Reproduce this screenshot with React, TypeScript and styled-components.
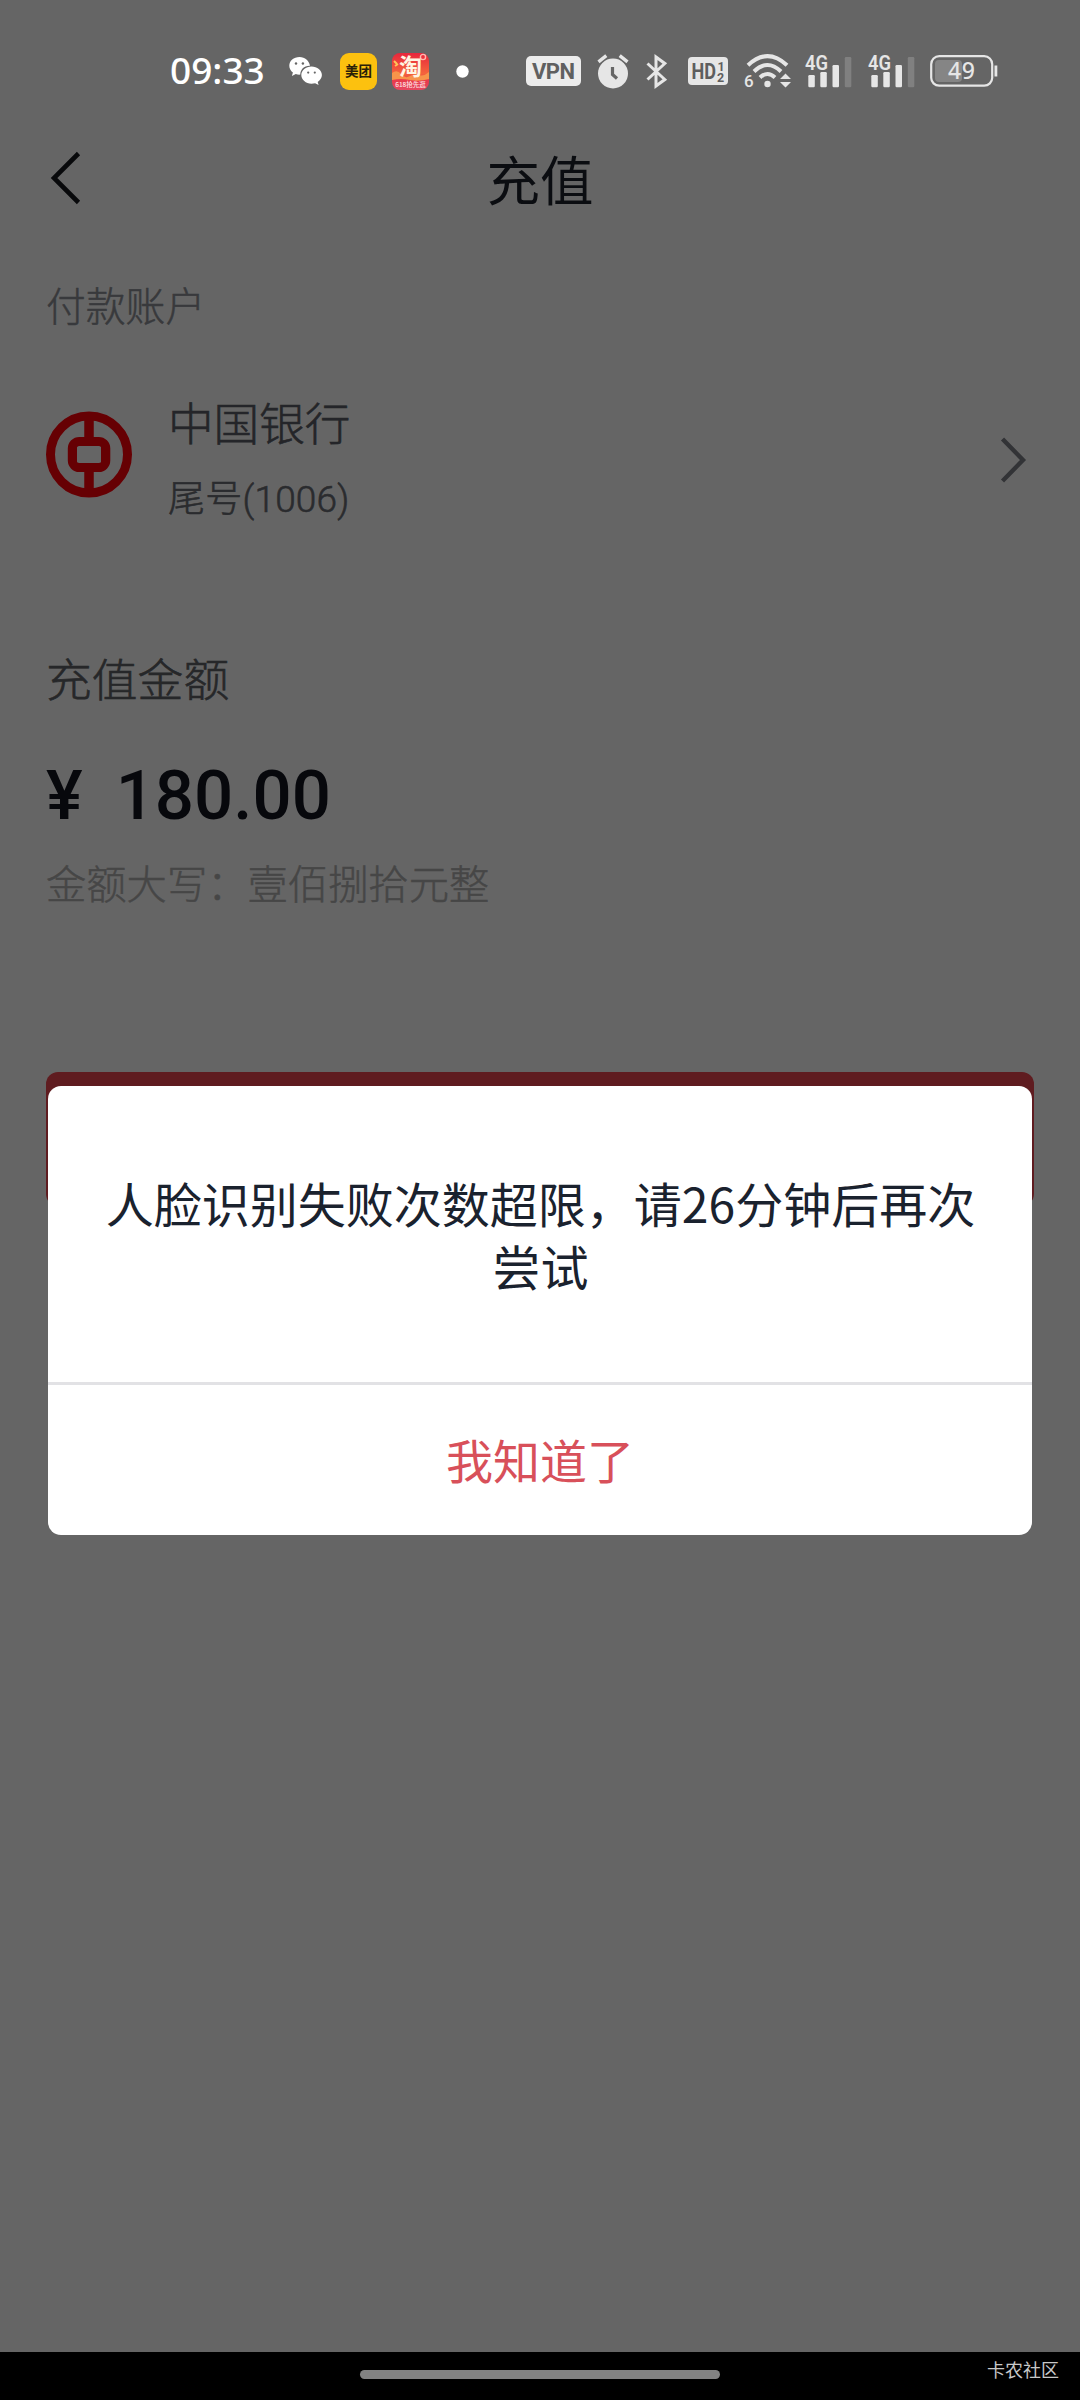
import React from "react";
import styled, { createGlobalStyle } from "styled-components";

const cjk = `"Noto Sans CJK SC", sans-serif`;

const GlobalStyle = createGlobalStyle`
  * { box-sizing: border-box; }
  body { margin: 0; background: #fff; }
`;

const Screen = styled.div`
  position: relative;
  display: flex;
  flex-direction: column;
  width: 1080px;
  height: 2400px;
  overflow: hidden;
  background: #fdfdfd;
  font-family: Roboto, ${cjk};
`;

const NavBar = styled.header`
  display: grid;
  grid-template-columns: 100px 1fr 100px;
  align-items: center;
  height: 80px;
  margin-top: 138px;
`;

const BackButton = styled.button`
  display: flex;
  justify-content: flex-end;
  padding: 0 19px 0 0;
  border: 0;
  background: none;
`;

const Title = styled.h1`
  margin: 0;
  text-align: center;
  font: 400 53.5px/80px ${cjk};
  color: #1d212b;
`;

const SectionLabel = styled.div`
  margin: 56px 0 0 46px;
  font: 300 39.8px/60px ${cjk};
  color: #8d9096;
  -webkit-text-stroke: 0.5px #8d9096;
`;

const AccountRow = styled.div`
  display: flex;
  align-items: center;
  height: 150px;
  margin-top: 48px;
  padding: 0 54px 0 46px;
`;

const AccountText = styled.div`
  flex: 1;
  display: flex;
  flex-direction: column;
  gap: 13px;
  margin-left: 36px;
  padding-top: 5px;
`;

const BankName = styled.div`
  font: 300 45.6px/68px ${cjk};
  color: #5a5d66;
  -webkit-text-stroke: 0.6px #5a5d66;
`;

const CardTail = styled.div`
  font: 300 37px/64px Roboto, ${cjk};
  color: #6a6d74;
  letter-spacing: 0.2px;
  -webkit-text-stroke: 0.6px #6a6d74;
`;

const AmountSection = styled.section`
  display: flex;
  flex-direction: column;
  margin: 110px 46px 0;
`;

const AmountLabel = styled.div`
  font: 300 45.8px/70px ${cjk};
  color: #606266;
  -webkit-text-stroke: 0.6px #606266;
`;

const Amount = styled.div`
  display: flex;
  gap: 33px;
  margin-top: 44px;
  font: 500 69px/80px Roboto, sans-serif;
  color: #12141f;
`;

const AmountWords = styled.div`
  margin-top: 16px;
  font: 300 40.3px/60px ${cjk};
  color: #b0b0b0;
  -webkit-text-stroke: 0.5px #b0b0b0;
`;

const SubmitButton = styled.button`
  height: 134px;
  margin: 160px 46px 0;
  border: 0;
  border-radius: 12px;
  background: #ed4850;
`;

const Backdrop = styled.div`
  position: absolute;
  inset: 0;
  background: rgba(0, 0, 0, 0.6);
`;

const StatusBar = styled.div`
  position: absolute;
  top: 0;
  left: 0;
  right: 0;
  display: flex;
  align-items: center;
  height: 142px;
  padding-left: 170px;
`;

const Clock = styled.div`
  width: 119px;
  margin-top: -2px;
  font: 500 37px/50px "Noto Sans", sans-serif;
  color: #fff;
`;

const Glyph = styled.svg<{ $gap?: number }>`
  flex: none;
  display: block;
  overflow: visible;
  margin-left: ${(p) => p.$gap ?? 0}px;
`;

const LogoSlot = styled.div`
  margin-bottom: 5px;
`;

const ArrowSlot = styled.div`
  margin-top: 5px;
`;

const Dialog = styled.div`
  position: absolute;
  top: 1086px;
  left: 48px;
  width: 984px;
  height: 449px;
  display: flex;
  flex-direction: column;
  border-radius: 13px;
  background: #fff;
  overflow: hidden;
`;

const Message = styled.p`
  flex: 1;
  margin: 0;
  padding: 85px 56px 0 57px;
  text-align: center;
  font: 400 48px/63px ${cjk};
  color: #1a222e;
`;

const ConfirmButton = styled.button`
  height: 153px;
  padding: 0 0 3px;
  border: 0;
  border-top: 3px solid #e2e2e5;
  background: none;
  font: 400 47px/70px ${cjk};
  color: #d8505a;
`;

const GestureBar = styled.div`
  position: absolute;
  left: 0;
  right: 0;
  bottom: 0;
  display: grid;
  grid-template-columns: 360px 360px 1fr;
  height: 48px;
  background: #000;
`;

const Pill = styled.div`
  grid-column: 2;
  height: 9px;
  margin-top: 18px;
  border-radius: 5px;
  background: #828282;
`;

const Watermark = styled.div`
  padding-right: 21px;
  text-align: right;
  font: 400 18px/35px ${cjk};
  color: #c8c8c8;
`;

const ink = "#e6e6e6";

const WeChat = () => (
  <Glyph width="33" height="28" viewBox="0 0 33 28">
    <path fill="#fff" d="M10.500 0C4.700 0 .3 3.900.3 8.800c0 2.800 1.400 5.200 3.600 6.800l-1 3.500 3.900-2c1.300.4 2.800.600 4.500.500C11.300 12.500 15 8.500 21 8.700 20 3.600 16.200 0 10.500 0z" />
    <path fill="#fff" d="M22.500 9.600c-5.600 0-10.200 3.700-10.200 8.500s4.500 8.600 10.200 8.600c1.300 0 2.500-.2 3.600-.5l3.500 1.900-.9-3.200c2.500-1.600 4.200-4 4.200-6.800 0-4.800-4.700-8.500-10.400-8.500z" />
    <g fill="#666">
      <circle cx="7" cy="6.500" r="1.200" /><circle cx="13.900" cy="6.500" r="1.200" />
      <circle cx="19.200" cy="15.600" r="1.100" /><circle cx="25.800" cy="15.600" r="1.100" />
    </g>
  </Glyph>
);

const Meituan = () => (
  <Glyph $gap={18} width="37" height="37" viewBox="0 0 37 37">
    <rect width="37" height="37" rx="9" fill="#fcc10f" />
    <text x="18.500" y="23.300" textAnchor="middle" fontFamily={cjk} fontWeight="700" fontSize="13.500" fill="#2a2008">美团</text>
  </Glyph>
);

const Taobao = () => (
  <Glyph $gap={15} width="37" height="37" viewBox="0 0 37 37">
    <defs>
      <linearGradient id="tb" x1="0" y1="0" x2="0" y2="1">
        <stop offset="0" stopColor="#e8263c" /><stop offset=".55" stopColor="#f4643c" /><stop offset=".75" stopColor="#e83a4c" /><stop offset="1" stopColor="#e64860" />
      </linearGradient>
    </defs>
    <rect width="37" height="37" rx="8" fill="url(#tb)" />
    <path d="M0 20q5-4 9 1t9 2 9-1 10-3v7q-10 3-19 1T0 27z" fill="#f7944a" />
    <circle cx="31" cy="4" r="2.600" fill="none" stroke="#ffb9b0" strokeWidth="1.400" />
    <path d="M2 8l3 3M3 13l3-2" stroke="#ffc457" strokeWidth="2" />
    <text x="18.500" y="22" textAnchor="middle" fontFamily={cjk} fontWeight="700" fontSize="23" fill="#fff4e2">淘</text>
    <text x="18.500" y="34" textAnchor="middle" fontFamily={cjk} fontWeight="500" fontSize="6.500" fill="#ffe4e4">618抢先逛</text>
  </Glyph>
);

const Dot = () => (
  <Glyph $gap={27} width="13" height="13" viewBox="0 0 13 13"><circle cx="6.500" cy="6.500" r="6.200" fill="#fff" /></Glyph>
);

const Vpn = () => (
  <Glyph $gap={57} width="55" height="30" viewBox="0 0 55 30">
    <rect width="55" height="30" rx="5" fill="#ececec" />
    <text x="27.500" y="22.700" textAnchor="middle" textLength="43" fontFamily="Roboto, sans-serif" fontWeight="700" fontSize="22" fill="#606060">VPN</text>
  </Glyph>
);

const Alarm = () => (
  <Glyph $gap={16} width="32" height="35" viewBox="0 0 32 35">
    <circle cx="16" cy="19.500" r="15" fill={ink} />
    <path d="M1.500 7.800L9.300 1.600M30.500 7.800L22.700 1.600" stroke={ink} strokeWidth="3.400" />
    <path d="M15.500 13v7.500l4.500 4" fill="none" stroke="#666" strokeWidth="3.200" />
  </Glyph>
);

const Bluetooth = () => (
  <Glyph $gap={17} width="22" height="35" viewBox="0 0 22 35">
    <path d="M1.500 9.500L18.800 25.500 10 32V3l8.800 6.500L1.500 25.500" fill="none" stroke={ink} strokeWidth="3" strokeLinejoin="miter" />
  </Glyph>
);

const Hd = () => (
  <Glyph $gap={20} width="40" height="28" viewBox="0 0 40 28">
    <rect width="40" height="28" rx="4" fill={ink} />
    <g fontFamily="Roboto, sans-serif" fontWeight="700" fill="#5e5e5e">
      <text x="3.500" y="22" textLength="24.500" lengthAdjust="spacingAndGlyphs" fontSize="22">HD</text>
      <text x="29.500" y="13.500" fontSize="12.500">1</text>
      <text x="29" y="25" fontSize="12.500">2</text>
    </g>
  </Glyph>
);

const Wifi = () => (
  <Glyph $gap={17} width="48" height="35" viewBox="0 0 48 35">
    <g fill="none" stroke={ink} strokeWidth="4">
      <path d="M3 11.200Q22.500 -7 42 11.200" />
      <path d="M9 17.500Q22.500 4.500 36 17.500" />
      <path d="M15 23.500Q22.500 16.500 30 23.500" />
    </g>
    <circle cx="22.500" cy="30" r="3.200" fill={ink} />
    <text x="-1" y="33" fontFamily="Roboto, sans-serif" fontWeight="500" fontSize="17" fill={ink}>6</text>
    <path d="M35 25l5.500-5.500L46 25zM35 28h11l-5.500 5.500z" fill={ink} />
  </Glyph>
);

const Signal = ({ gap }: { gap: number }) => (
  <Glyph $gap={gap} width="47" height="34" viewBox="0 0 47 34">
    <text x="0" y="16" textLength="23" lengthAdjust="spacingAndGlyphs" fontFamily="Roboto, sans-serif" fontWeight="600" fontSize="20.500" fill={ink}>4G</text>
    <g fill={ink}>
      <rect x="3.300" y="21" width="6.500" height="12.300" rx="1.200" />
      <rect x="15.300" y="18" width="6.500" height="15.300" rx="1.200" />
      <rect x="27.500" y="11" width="6.500" height="22.300" rx="1.200" />
      <rect x="39.800" y="3" width="6.500" height="30.300" rx="1.200" fill="#808080" />
    </g>
  </Glyph>
);

const Battery = () => (
  <Glyph $gap={15} width="68" height="32" viewBox="0 0 68 32">
    <rect x="5" y="5" width="27" height="22" rx="4" fill="#858585" />
    <rect x="1.200" y="1.200" width="61" height="29.500" rx="8" fill="none" stroke={ink} strokeWidth="2.200" />
    <rect x="64.500" y="10.500" width="2.800" height="11" fill={ink} />
    <text x="31.500" y="24" textAnchor="middle" textLength="27" fontFamily={`"Noto Sans", sans-serif`} fontWeight="500" fontSize="23" fill={ink}>49</text>
  </Glyph>
);

const BankLogo = () => (
  <Glyph width="86" height="87" viewBox="0 0 86 87">
    <g fill="none" stroke="#ff0009">
      <circle cx="43" cy="43.500" r="38.500" strokeWidth="9" />
      <rect x="26.300" y="30.500" width="33.500" height="26" rx="7" strokeWidth="9" />
      <path d="M43 6v22M43 59v22" strokeWidth="9.500" />
    </g>
    <path fill="#ff0009" d="M27 31h32v25H27zM31 35v17h24V35z" fillRule="evenodd" />
  </Glyph>
);

export default function App() {
  return (
    <Screen>
      <GlobalStyle />
      <NavBar>
        <BackButton aria-label="返回">
          <Glyph width="31" height="54" viewBox="0 0 31 54">
            <path d="M28.500 2.500L4 27l24.500 24.500" fill="none" stroke="#16181d" strokeWidth="4.600" />
          </Glyph>
        </BackButton>
        <Title>充值</Title>
      </NavBar>
      <SectionLabel>付款账户</SectionLabel>
      <AccountRow>
        <LogoSlot><BankLogo /></LogoSlot>
        <AccountText>
          <BankName>中国银行</BankName>
          <CardTail>尾号(1006)</CardTail>
        </AccountText>
        <ArrowSlot>
          <Glyph width="26" height="48" viewBox="0 0 26 48">
            <path d="M2.500 3L23 24 2.500 45" fill="none" stroke="#7e8188" strokeWidth="4.400" />
          </Glyph>
        </ArrowSlot>
      </AccountRow>
      <AmountSection>
        <AmountLabel>充值金额</AmountLabel>
        <Amount><span>¥</span><span>180.00</span></Amount>
        <AmountWords>金额大写：壹佰捌拾元整</AmountWords>
      </AmountSection>
      <SubmitButton aria-label="确认" />
      <Backdrop />
      <StatusBar>
        <Clock>09:33</Clock>
        <WeChat />
        <Meituan />
        <Taobao />
        <Dot />
        <Vpn />
        <Alarm />
        <Bluetooth />
        <Hd />
        <Wifi />
        <Signal gap={12} />
        <Signal gap={16} />
        <Battery />
      </StatusBar>
      <Dialog role="dialog">
        <Message>人脸识别失败次数超限，请26分钟后再次尝试</Message>
        <ConfirmButton>我知道了</ConfirmButton>
      </Dialog>
      <GestureBar>
        <Pill />
        <Watermark>卡农社区</Watermark>
      </GestureBar>
    </Screen>
  );
}
